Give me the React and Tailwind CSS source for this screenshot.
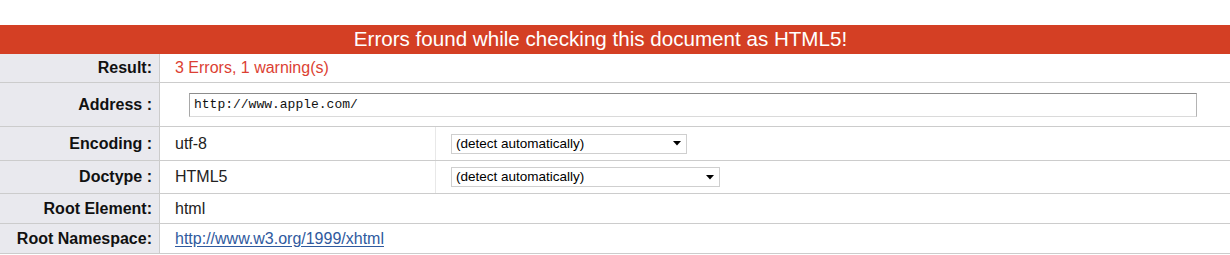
import React from "react";

const font = { fontFamily: '"Liberation Sans", Arial, sans-serif' };

function Row({ label, h, children }) {
  return (
    <div className={`flex border-b border-[#cccccc] ${h}`}>
      <div className="w-[160px] shrink-0 bg-[#e9e9ee] border-r border-[#cccccc] flex items-center justify-end pr-[7px] font-bold text-[16px] text-[#111]">
        {label}
      </div>
      <div className="flex-1 flex items-center min-w-0">{children}</div>
    </div>
  );
}

function Select({ w }) {
  return (
    <div
      className={`${w} h-[20px] border border-[#cfcfcf] bg-white flex items-center justify-between pl-[4px] pr-[5px] text-[13.5px] text-black`}
    >
      <span className="leading-none">(detect automatically)</span>
      <svg width="8" height="5" viewBox="0 0 8 5">
        <polygon points="0,0 8,0 4,4.5" fill="#000" />
      </svg>
    </div>
  );
}

export default function App() {
  return (
    <div className="w-[1230px] h-[255px] bg-white pt-[25px]" style={font}>
      <div className="h-[29px] bg-[#d43f24] text-white text-[20.6px] flex items-center justify-center leading-none pr-[29px]">
        Errors found while checking this document as HTML5!
      </div>
      <Row label="Result:" h="h-[29px]">
        <span className="pl-[15px] text-[16px] text-[#dc3f33]">3 Errors, 1 warning(s)</span>
      </Row>
      <Row label="Address :" h="h-[44px]">
        <div className="pl-[29px] w-full pr-[33px]">
          <div className="h-[24px] bg-white border border-t-[#8c8c8c] border-l-[#a8a8a8] border-r-[#b4b4b4] border-b-[#dadada] flex items-center pl-[4px] text-[13px] text-[#111]" style={{ fontFamily: '"Liberation Mono", "Courier New", monospace' }}>
            http://www.apple.com/
          </div>
        </div>
      </Row>
      <Row label="Encoding :" h="h-[34px]">
        <div className="w-[276px] h-full flex items-center pl-[15px] text-[16px] text-[#222] border-r border-[#e8e8e8]">utf-8</div>
        <div className="pl-[15px] flex items-center h-full">
          <Select w="w-[236px]" />
        </div>
      </Row>
      <Row label="Doctype :" h="h-[33px]">
        <div className="w-[276px] h-full flex items-center pl-[15px] text-[16px] text-[#222] border-r border-[#e8e8e8]">HTML5</div>
        <div className="pl-[15px] flex items-center h-full">
          <Select w="w-[269px]" />
        </div>
      </Row>
      <Row label="Root Element:" h="h-[30px]">
        <span className="pl-[15px] text-[16px] text-[#222]">html</span>
      </Row>
      <Row label="Root Namespace:" h="h-[30px]">
        <span className="pl-[15px] text-[16px] text-[#2f5a9e] underline underline-offset-2">http://www.w3.org/1999/xhtml</span>
      </Row>
    </div>
  );
}
